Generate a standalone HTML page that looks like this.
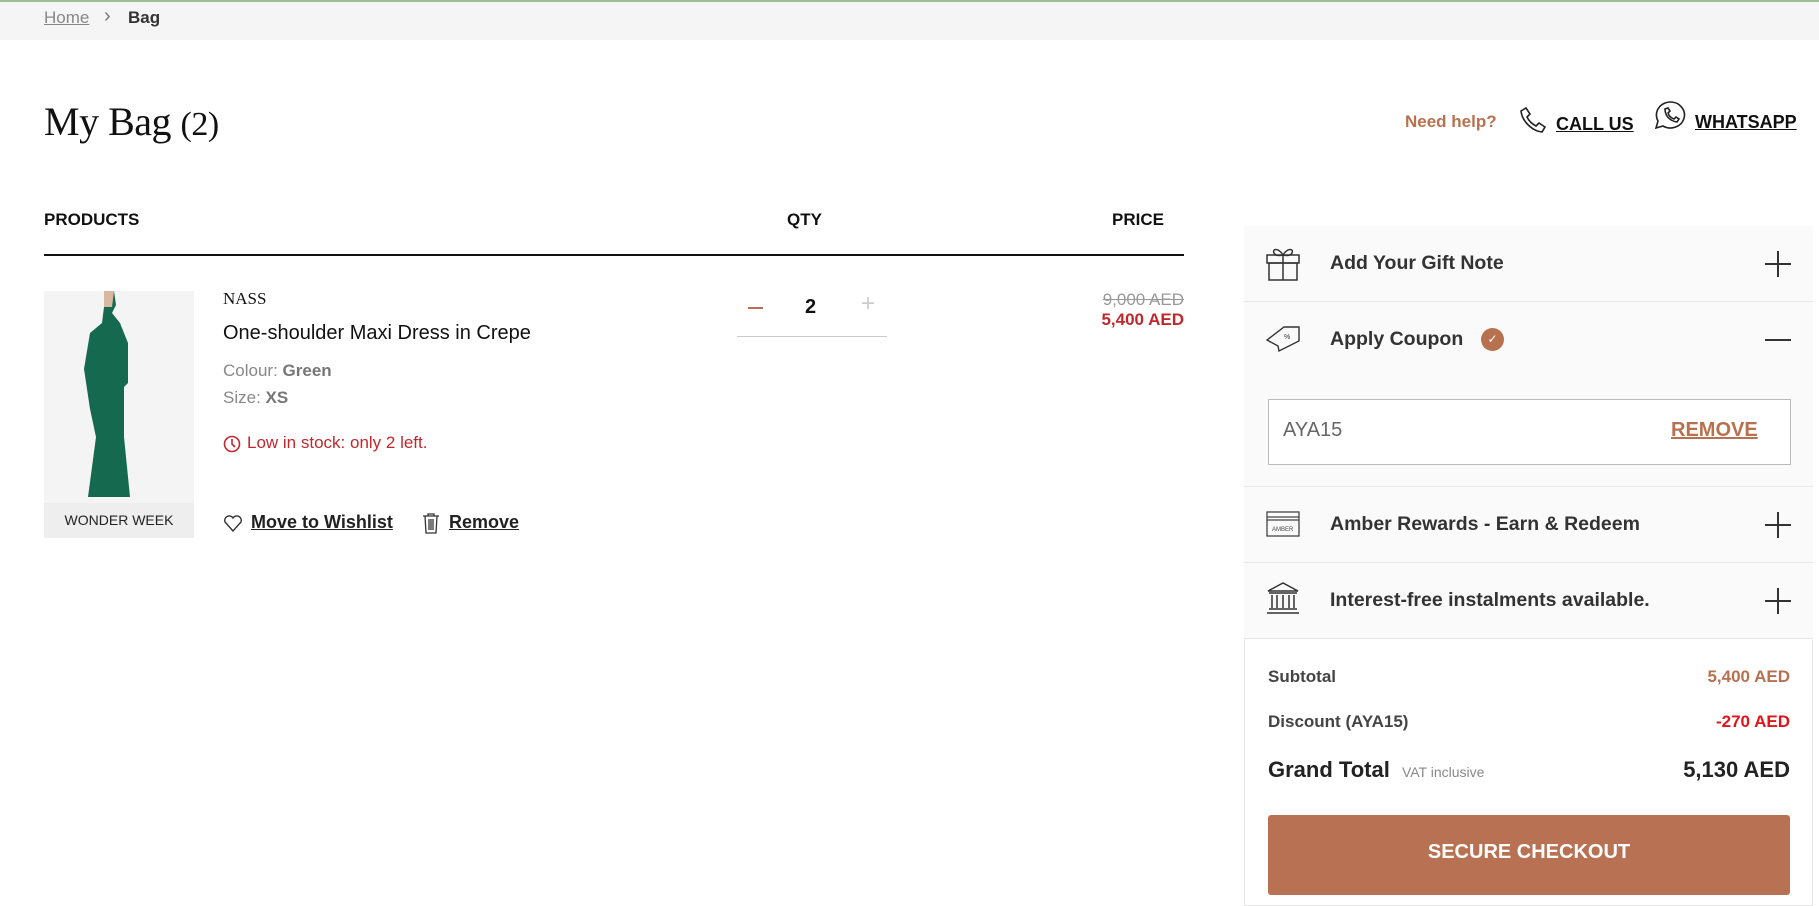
<!DOCTYPE html>
<html><head><meta charset="utf-8"><style>
*{margin:0;padding:0;box-sizing:border-box}
body{width:1819px;height:889px;overflow:hidden;background:#fff;font-family:"Liberation Sans",sans-serif;color:#222;position:relative}
.a{position:absolute;white-space:nowrap}
.u{text-decoration:underline}
.row{position:absolute;left:1244px;width:569px;background:#fafafa;border-bottom:1px solid #e8e8e8}
.plus{position:absolute;right:22px;width:26px;height:26px}
.plus:before{content:"";position:absolute;left:0;top:12px;width:26px;height:2px;background:#333}
.plus.p:after{content:"";position:absolute;left:12px;top:0;width:2px;height:26px;background:#333}
</style></head><body>
<div class="a" style="left:0;top:0;width:1819px;height:40px;background:#f5f5f5;border-top:2px solid #9bbf8e"></div>
<div class="a u" style="left:44px;top:8px;font-size:17px;color:#888">Home</div>
<div class="a" style="left:104px;top:5px;font-size:20px;color:#777">&#8250;</div>
<div class="a" style="left:128px;top:8px;font-size:17px;font-weight:bold;color:#333">Bag</div>
<div class="a" style="left:44px;top:98px;font-family:'Liberation Serif',serif;font-size:40px;color:#111;letter-spacing:-0.5px">My Bag <span style="font-size:34px">(2)</span></div>
<div class="a" style="left:1405px;top:112px;font-size:17px;font-weight:bold;color:#b8714f">Need help?</div>
<svg class="a" style="left:1520px;top:106px" width="26" height="28" viewBox="0 0 26 28" fill="none" stroke="#222" stroke-width="1.6"><path d="M6 2l4 6-3 3c2 4 5 7 9 9l3-3 6 4-3 5C12 25 2 15 1 5z"/></svg>
<div class="a u" style="left:1556px;top:114px;font-size:18px;font-weight:bold;color:#111">CALL US</div>
<svg class="a" style="left:1654px;top:100px" width="34" height="32" viewBox="0 0 34 32" fill="none" stroke="#222" stroke-width="1.6"><path d="M17 2a14 13 0 1 1-8 24l-7 2 2-7A14 13 0 0 1 17 2z"/><path d="M11 9c0 7 5 12 12 13l2-3-3-2-2 2c-3-1-5-3-6-6l2-2-2-3z"/></svg>
<div class="a u" style="left:1695px;top:112px;font-size:18px;font-weight:bold;color:#111">WHATSAPP</div>
<div class="a" style="left:44px;top:210px;font-size:17px;font-weight:bold;color:#111">PRODUCTS</div>
<div class="a" style="left:787px;top:210px;font-size:17px;font-weight:bold;color:#111">QTY</div>
<div class="a" style="left:1112px;top:210px;font-size:17px;font-weight:bold;color:#111">PRICE</div>
<div class="a" style="left:44px;top:254px;width:1140px;height:1.5px;background:#111"></div>
<div class="a" style="left:44px;top:291px;width:150px;height:247px;background:#f4f4f4"></div>
<svg class="a" style="left:54px;top:291px" width="110" height="212" viewBox="0 0 110 212"><path d="M52 0h8l2 14-4 8 8 10 8 20v40l-4 4v50l6 60H34l8-60-6-28-6-40 6-36 12-10z" fill="#14694f"/><path d="M50 0h10l-2 16h-8z" fill="#d8b8a0"/></svg>
<div class="a" style="left:44px;top:503px;width:150px;height:35px;background:#eee;font-size:14px;text-align:center;line-height:35px;color:#222">WONDER WEEK</div>
<div class="a" style="left:223px;top:289px;font-family:'Liberation Serif',serif;font-size:17px;color:#111">NASS</div>
<div class="a" style="left:223px;top:322px;font-size:20px;color:#111">One-shoulder Maxi Dress in Crepe</div>
<div class="a" style="left:223px;top:361px;font-size:17px;color:#888">Colour: <b style="color:#777">Green</b></div>
<div class="a" style="left:223px;top:388px;font-size:17px;color:#888">Size: <b style="color:#777">XS</b></div>
<svg class="a" style="left:223px;top:435px" width="18" height="18" viewBox="0 0 18 18" fill="none" stroke="#c0282e" stroke-width="1.6"><circle cx="9" cy="9" r="7.5"/><path d="M9 4v5l3 3"/></svg>
<div class="a" style="left:247px;top:433px;font-size:17px;color:#c0282e">Low in stock: only 2 left.</div>
<svg class="a" style="left:223px;top:513px" width="20" height="20" viewBox="0 0 20 20" fill="none" stroke="#333" stroke-width="1.4"><path d="M10 18L2 9a4.5 4.5 0 0 1 8-4 4.5 4.5 0 0 1 8 4z"/></svg>
<div class="a u" style="left:251px;top:512px;font-size:18px;font-weight:bold;color:#222">Move to Wishlist</div>
<svg class="a" style="left:421px;top:512px" width="20" height="22" viewBox="0 0 20 22" fill="none" stroke="#333" stroke-width="1.3"><path d="M2 4h16M7 4V2h6v2M4 4l1 17h10l1-17M8 7v11M10 7v11M12 7v11"/></svg>
<div class="a u" style="left:449px;top:512px;font-size:18px;font-weight:bold;color:#222">Remove</div>
<div class="a" style="left:748px;top:307px;width:15px;height:2px;background:#b8714f"></div>
<div class="a" style="left:805px;top:296px;font-size:20px;font-weight:bold;color:#111">2</div>
<div class="a" style="left:861px;top:290px;font-size:24px;color:#ccc">+</div>
<div class="a" style="left:737px;top:336px;width:150px;height:1px;background:#ccc"></div>
<div class="a" style="left:1094px;top:290px;width:90px;text-align:right;font-size:17px;color:#999;text-decoration:line-through">9,000 AED</div>
<div class="a" style="left:1084px;top:310px;width:100px;text-align:right;font-size:17px;font-weight:bold;color:#c0282e">5,400 AED</div>
<div class="a" style="left:1244px;top:226px;width:569px;height:680px;border:1px solid #e6e6e6"></div>
<div class="row" style="top:226px;height:76px">
<svg class="a" style="left:22px;top:18px" width="34" height="38" viewBox="0 0 34 38" fill="none" stroke="#333" stroke-width="1.5"><rect x="1" y="11" width="32" height="8"/><rect x="3" y="19" width="28" height="17"/><path d="M17 11v25M17 11c-5-8-11-6-9-2s9 2 9 2c5-8 11-6 9-2s-9 2-9 2"/></svg>
<div class="a" style="left:86px;top:26px;font-size:19.5px;font-weight:bold;color:#333">Add Your Gift Note</div><div class="plus p" style="top:25px"></div></div>
<div class="row" style="top:302px;height:185px;background:#fafafa">
<svg class="a" style="left:22px;top:22px" width="36" height="30" viewBox="0 0 36 30" fill="none" stroke="#333" stroke-width="1.4"><path d="M1 16L18 3h15v14L13 27l-1-5z"/><text x="18" y="15" font-size="7" fill="#333" stroke="none">%</text></svg>
<div class="a" style="left:86px;top:26px;font-size:19.5px;font-weight:bold;color:#333">Apply Coupon</div>
<div class="a" style="left:237px;top:26px;width:23px;height:23px;border-radius:50%;background:#b8714f;color:#fff;font-size:12px;text-align:center;line-height:23px">✓</div>
<div class="plus" style="top:25px"></div>
<div class="a" style="left:24px;top:97px;width:523px;height:66px;border:1px solid #bbb;background:#fff"></div>
<div class="a" style="left:39px;top:117px;font-size:20px;color:#666">AYA15</div>
<div class="a u" style="left:427px;top:117px;font-size:20px;font-weight:bold;color:#b8714f">REMOVE</div></div>
<div class="row" style="top:487px;height:76px">
<svg class="a" style="left:22px;top:24px" width="34" height="26" viewBox="0 0 34 26" fill="none" stroke="#444" stroke-width="1.3"><rect x="1" y="1" width="32" height="24"/><path d="M1 6h32M1 9h32"/><text x="6" y="20" font-size="6" fill="#444" stroke="none">AMBER</text></svg>
<div class="a" style="left:86px;top:26px;font-size:19.5px;font-weight:bold;color:#333">Amber Rewards - Earn &amp; Redeem</div><div class="plus p" style="top:25px"></div></div>
<div class="row" style="top:563px;height:76px">
<svg class="a" style="left:22px;top:18px" width="34" height="34" viewBox="0 0 34 34" fill="none" stroke="#333" stroke-width="1.5"><path d="M2 10L17 2l15 8zM3 12h28M6 14v13M11 14v13M17 14v13M23 14v13M28 14v13M3 28h28M1 32h32"/></svg>
<div class="a" style="left:86px;top:26px;font-size:19.5px;font-weight:bold;color:#333">Interest-free instalments available.</div><div class="plus p" style="top:25px"></div></div>
<div class="a" style="left:1268px;top:667px;font-size:17px;font-weight:bold;color:#444">Subtotal</div>
<div class="a" style="left:1640px;top:667px;width:150px;text-align:right;font-size:17px;font-weight:bold;color:#b8714f">5,400 AED</div>
<div class="a" style="left:1268px;top:712px;font-size:17px;font-weight:bold;color:#444">Discount (AYA15)</div>
<div class="a" style="left:1640px;top:712px;width:150px;text-align:right;font-size:17px;font-weight:bold;color:#e0141a">-270 AED</div>
<div class="a" style="left:1268px;top:757px;font-size:22px;font-weight:bold;color:#222">Grand Total <span style="font-size:14px;font-weight:normal;color:#888;margin-left:6px">VAT inclusive</span></div>
<div class="a" style="left:1600px;top:757px;width:190px;text-align:right;font-size:22px;font-weight:bold;color:#222">5,130 AED</div>
<div class="a" style="left:1268px;top:815px;width:522px;height:80px;background:#b87152;border-radius:3px;color:#fff;font-size:20px;font-weight:bold;text-align:center;line-height:74px">SECURE CHECKOUT</div>
</body></html>
